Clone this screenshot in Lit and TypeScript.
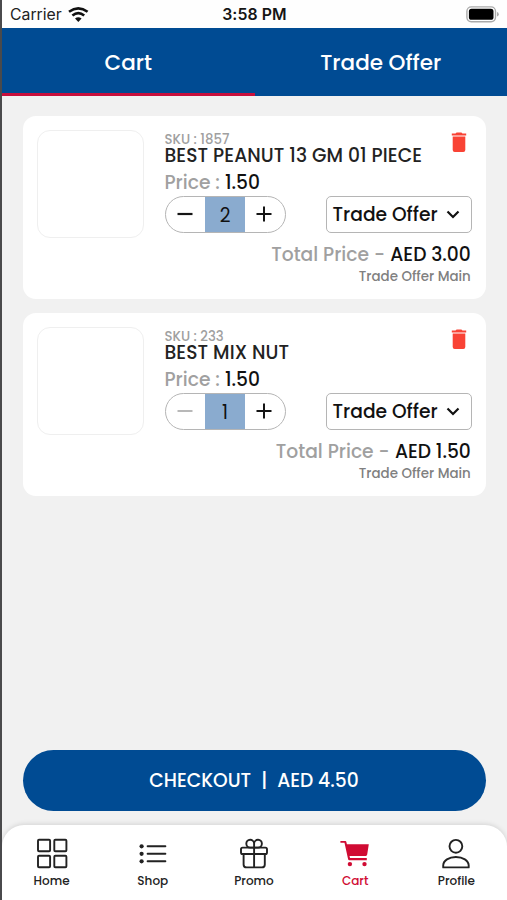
import { LitElement, html, svg, css } from "lit";
import { customElement, property } from "lit/decorators.js";

interface Item { sku: string; name: string; price: string; qty: number; total: string; }

const items: Item[] = [
  { sku: "1857", name: "BEST PEANUT 13 GM 01 PIECE", price: "1.50", qty: 2, total: "AED 3.00" },
  { sku: "233", name: "BEST MIX NUT", price: "1.50", qty: 1, total: "AED 1.50" },
];

const nav = [
  { label: "Home", icon: svg`<g fill="none" stroke="currentColor" stroke-width="1.9"><rect x="3" y="2.7" width="12.1" height="11.5" rx="1"/><rect x="19.3" y="2.7" width="12.1" height="11.5" rx="1"/><rect x="3" y="18.7" width="12.1" height="11.6" rx="1"/><rect x="19.3" y="18.7" width="12.1" height="11.6" rx="1"/></g>` },
  { label: "Shop", icon: svg`<g fill="currentColor"><circle cx="5.6" cy="9.3" r="2.1"/><circle cx="5.6" cy="16.8" r="2.1"/><circle cx="5.6" cy="24.3" r="2.1"/></g><path d="M11.6 9.3H29.4M11.6 16.8H29.4M11.6 24.3H29.4" fill="none" stroke="currentColor" stroke-width="1.9" stroke-linecap="round"/>` },
  { label: "Promo", icon: svg`<g fill="none" stroke="currentColor" stroke-width="1.9" stroke-linejoin="round"><rect x="4" y="10.6" width="26" height="6.4" rx="1.6"/><path d="M6.6 17V27.4Q6.6 30.4 9.6 30.4H24.8Q27.8 30.4 27.8 27.4V17M17.1 10.6V30.4M17.1 10.6V6.5A3.9 3.9 0 1 0 13.2 10.6ZM17.1 10.6V6.5A3.9 3.9 0 1 1 21 10.6Z"/></g>` },
  { label: "Cart", icon: svg`<g fill="currentColor"><path d="M2.4 3.9H7.4Q8.1 3.9 8.3 4.7L8.9 7.2H30.8L29.2 17.6Q29 18.9 27.8 18.9H11.5L12 21H28.8V23.2H11.4Q10.3 23.2 10.1 22.2L6.5 5.8H2.4Z"/><circle cx="11.9" cy="27.1" r="2.2"/><circle cx="26.5" cy="27.1" r="2.2"/></g>` },
  { label: "Profile", icon: svg`<g fill="none" stroke="currentColor" stroke-width="1.9" stroke-linejoin="round"><circle cx="16.9" cy="9.3" r="6.4"/><path d="M4.2 30.4V28.6C4.2 23.4 10 20 16.9 20S29.7 23.4 29.7 28.6V30.4Z"/></g>` },
];

@customElement("status-bar")
export class StatusBar extends LitElement {
  static styles = css`
    :host { display: grid; grid-template-columns: 1fr auto 1fr; align-items: center; height: 28px; padding: 2px 8px 0 8px; box-sizing: border-box; background: #fefefe; color: #151515; line-height: 26px; font-family: Inter, sans-serif; }
    .left { display: flex; align-items: center; gap: 6px; }
    .carrier { font-size: 15.8px; color: #222; }
    .time { font-size: 15.8px; font-weight: 600; letter-spacing: 0.1px; }
    .battery { justify-self: end; margin-bottom: 2px; }
    svg { display: block; }
  `;
  render() {
    return html`
      <div class="left"><span class="carrier">Carrier</span>
        <svg width="21" height="16" viewBox="0 0 21 16"><g fill="none" stroke="#111" stroke-width="2.6"><path d="M1 4.7Q10.3 -2 19.6 4.7"/><path d="M4.4 8.6Q10.3 3.8 16.2 8.6"/></g><path d="M7 11.5Q10.3 8.8 13.6 11.5L10.3 15Z" fill="#111"/></svg>
      </div>
      <span class="time">3:58 PM</span>
      <svg class="battery" width="33" height="17" viewBox="0 0 33 17"><rect x=".9" y=".9" width="28.6" height="14.8" rx="4.4" fill="none" stroke="#aaa" stroke-width="1.4"/><rect x="2.9" y="2.8" width="24.6" height="11" rx="2.6" fill="#000"/><path d="M31 6Q32.8 6.4 32.8 8.3T31 10.6Z" fill="#aaa"/></svg>
    `;
  }
}

@customElement("cart-item")
export class CartItem extends LitElement {
  @property({ attribute: false }) item!: Item;
  static styles = css`
    :host { display: grid; grid-template-columns: 107px 1fr; column-gap: 21px; box-sizing: border-box; height: 183px; padding: 14px 14px 0 14px; border-radius: 13px; background: #fff; color: #111; font-weight: 500; }
    .thumb { height: 108px; box-sizing: border-box; border: 1px solid #efefef; border-radius: 13px; }
    .body { display: flex; flex-direction: column; white-space: nowrap; font-size: 18.7px; }
    .head { display: flex; justify-content: space-between; height: 33px; }
    .sku { margin-top: 1px; font-size: 13.3px; line-height: 17px; color: #a0a0a0; }
    .name { line-height: 16px; color: #222; letter-spacing: 0.07px; }
    .price { margin-top: 10px; line-height: 20px; display: flex; gap: 5px; }
    .muted { color: #a0a0a0; }
    .trash { margin: 2px 5px 0 0; display: block; }
    .controls { display: flex; justify-content: space-between; margin-top: 3px; }
    .stepper { display: grid; grid-template-columns: 1fr 40px 1fr; width: 121px; height: 37px; box-sizing: border-box; border: 1px solid #b5b5b5; border-radius: 19px; }
    .step { display: flex; align-items: center; justify-content: center; padding: 0 1px 1px 0; }
    .qty { background: #8aabcf; text-align: center; line-height: 37px; height: 35px; font-weight: 400; }
    .select { display: flex; align-items: center; justify-content: space-between; width: 146px; height: 37px; box-sizing: border-box; border: 1px solid #b5b5b5; border-radius: 5px; padding: 0 11px 1px 6px; }
    .total { display: flex; justify-content: flex-end; gap: 5.5px; margin-top: 12px; padding-right: 0.7px; line-height: 20px; }
    .offer { align-self: flex-end; margin-top: 3px; padding-right: 0.7px; font-size: 13.4px; line-height: 18px; color: #808080; }
  `;
  render() {
    const i = this.item;
    return html`
      <div class="thumb"></div>
      <div class="body">
        <div class="head">
          <div><div class="sku">SKU : ${i.sku}</div><div class="name">${i.name}</div></div>
          <svg class="trash" width="16" height="21" viewBox="0 0 16 21"><path d="M.8 1.5H4.5L5.6 .5H10.4L11.5 1.5H15.2V3.4H.8ZM1.7 4.4H14.3V18Q14.3 20 12.3 20H3.7Q1.7 20 1.7 18Z" fill="#f94335"/></svg>
        </div>
        <div class="price"><span class="muted">Price :</span><span>${i.price}</span></div>
        <div class="controls">
          <div class="stepper">
            <div class="step"><svg width="16" height="16" viewBox="0 0 16 16"><path d="M.5 8H15.5" stroke=${i.qty > 1 ? "#151515" : "#b0b0b0"} stroke-width=${i.qty > 1 ? 2.2 : 1.8} /></svg></div>
            <div class="qty">${i.qty}</div>
            <div class="step"><svg width="16" height="16" viewBox="0 0 16 16"><path d="M.5 8H15.5M8 .5V15.5" stroke="#151515" stroke-width="2"/></svg></div>
          </div>
          <div class="select"><span>Trade Offer</span><svg width="14" height="9" viewBox="0 0 14 9"><path d="M1.5 1.5L7 7L12.5 1.5" fill="none" stroke="#111" stroke-width="2.2"/></svg></div>
        </div>
        <div class="total"><span class="muted">Total Price -</span><span>${i.total}</span></div>
        <div class="offer">Trade Offer Main</div>
      </div>`;
  }
}

@customElement("app-root")
export class AppRoot extends LitElement {
  static styles = css`
    :host { display: flex; flex-direction: column; height: 900px; box-sizing: border-box; border-left: 2px solid #4a4a4c; background: #f1f1f1; font-family: Poppins, Inter, sans-serif; overflow: hidden; }
    .tabs { display: grid; grid-template-columns: 1fr 1fr; height: 68px; background: #004b93; color: #fff; font-size: 21.5px; font-weight: 500; text-align: center; line-height: 69px; flex: none; }
    .tab { box-sizing: border-box; height: 68px; }
    .active { border-bottom: 3px solid #c80f3c; }
    .list { display: flex; flex-direction: column; gap: 14px; padding: 20px 21.5px 0 20.5px; flex: 1; }
    .checkout { display: flex; justify-content: center; gap: 10px; align-items: center; flex: none; height: 61px; margin: 0 21.5px 14px 20.5px; border-radius: 31px; background: #004b93; color: #fff; font-size: 18.7px; font-weight: 500; }
    .nav { flex: none; height: 75px; background: #fff; border-radius: 22px 22px 0 0; box-shadow: 0 -1px 5px rgba(0,0,0,.12); color: #222; font-size: 12px; font-weight: 500; }
    .entries { display: grid; grid-template-columns: repeat(5, 1fr); margin-left: -1px; }
    .entry { display: flex; flex-direction: column; align-items: center; padding-top: 12px; line-height: 16px; gap: 4px; }
    .entry svg { display: block; }
    .on { color: #d00b33; }
  `;
  render() {
    return html`
      <status-bar></status-bar>
      <div class="tabs"><div class="tab active">Cart</div><div class="tab">Trade Offer</div></div>
      <div class="list">${items.map((i) => html`<cart-item .item=${i}></cart-item>`)}</div>
      <div class="checkout"><span>CHECKOUT</span><span>|</span><span>AED 4.50</span></div>
      <div class="nav"><div class="entries">${nav.map((n) => html`<div class="entry ${n.label === "Cart" ? "on" : ""}"><svg width="34" height="32" viewBox="0 0 34 32">${n.icon}</svg><span>${n.label}</span></div>`)}</div></div>
    `;
  }
}
